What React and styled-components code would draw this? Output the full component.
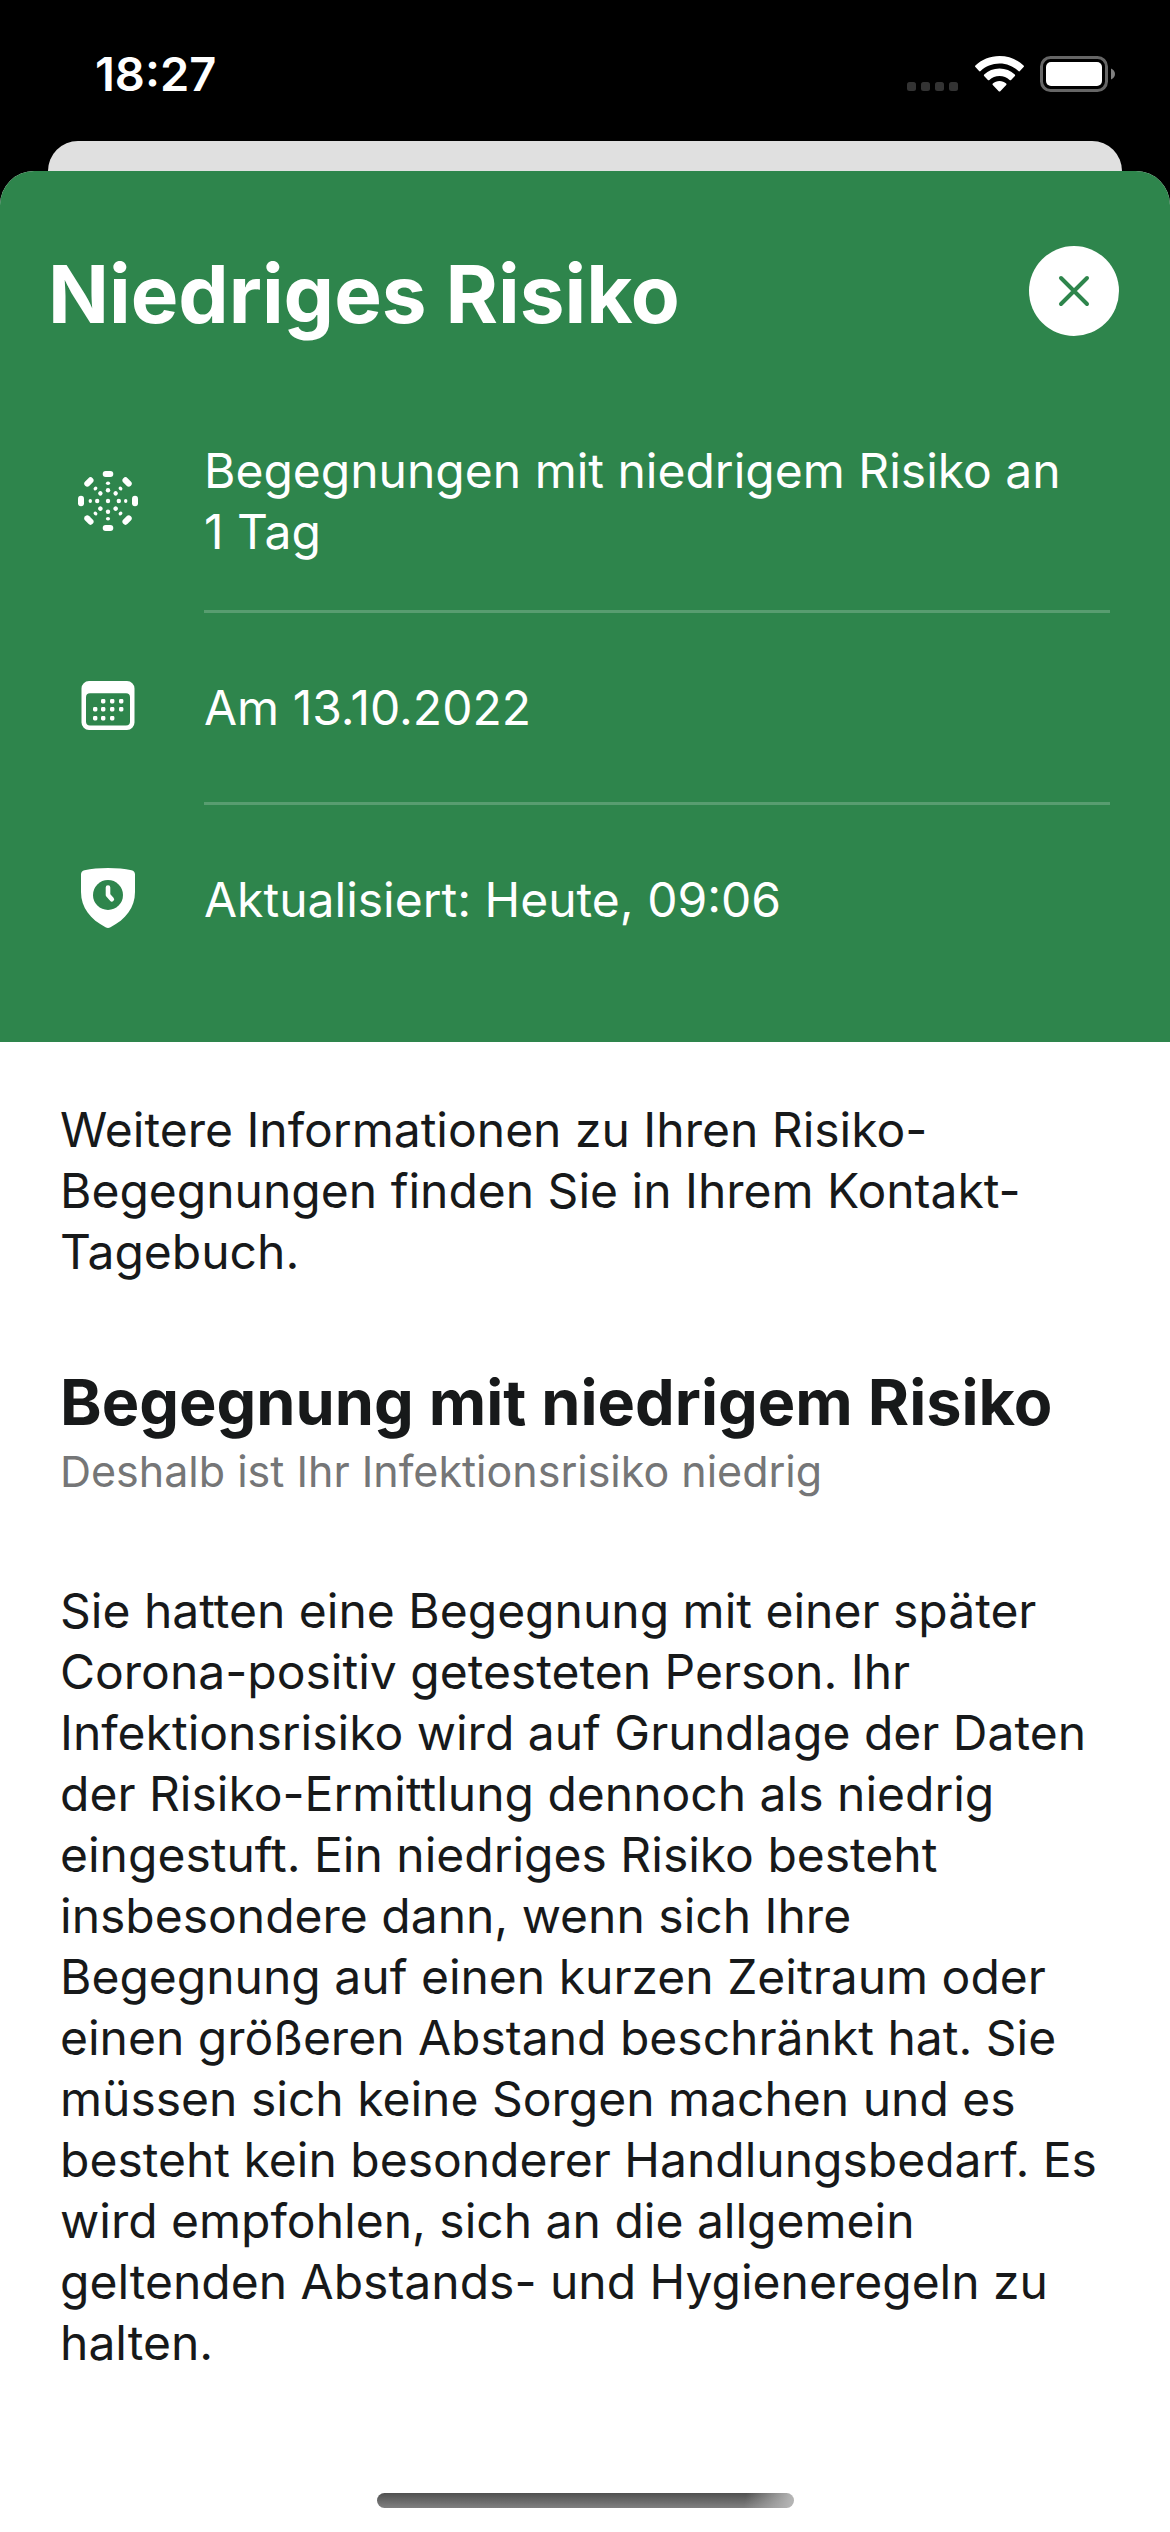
import React from "react";
import styled, { createGlobalStyle } from "styled-components";

const GREEN = "#2e854c";

const GlobalStyle = createGlobalStyle`
  * { box-sizing: border-box; }
  body {
    margin: 0;
    background: #000;
    font-family: Inter, "Liberation Sans", sans-serif;
  }
  h1, h2, p, ul { margin: 0; padding: 0; }
`;

const Screen = styled.div`
  display: flex;
  flex-direction: column;
  min-height: 100vh;
`;

const StatusBar = styled.header`
  display: flex;
  align-items: flex-start;
  justify-content: space-between;
  height: 141px;
  padding: 44px 54px 0 95px;
  color: #fff;
`;

const Clock = styled.time`
  font-size: 47px;
  font-weight: 600;
  line-height: 60px;
`;

const StatusIcons = styled.div`
  display: flex;
  align-items: center;
  gap: 16px;
  height: 60px;
`;

const PreviousSheet = styled.div`
  height: 30px;
  margin: 0 48px;
  border-radius: 30px 30px 0 0;
  background: #e0e0e0;
`;

const Sheet = styled.main`
  display: flex;
  flex: 1;
  flex-direction: column;
  overflow: hidden;
  border-radius: 34px 34px 0 0;
  background: #fff;
`;

const RiskHeader = styled.section`
  padding: 75px 0 48px;
  background: ${GREEN};
  color: #fff;
`;

const TitleRow = styled.div`
  display: flex;
  align-items: flex-start;
  justify-content: space-between;
  margin-bottom: 50px;
  padding: 0 51px 0 48px;
`;

const Title = styled.h1`
  font-size: 80px;
  font-weight: 700;
  line-height: 96px;
`;

const CloseButton = styled.button`
  display: flex;
  flex: none;
  align-items: center;
  justify-content: center;
  width: 90px;
  height: 90px;
  padding: 0;
  border: 0;
  border-radius: 50%;
  background: #fff;
  color: ${GREEN};
`;

const FactList = styled.ul`
  list-style: none;
  padding: 0 60px 0 78px;
`;

const Fact = styled.li`
  display: flex;
  align-items: stretch;
  gap: 66px;
`;

const FactIcon = styled.span`
  display: flex;
  flex: none;
  align-items: center;
  width: 60px;
  padding-bottom: 3px;
`;

const FactText = styled.p`
  display: flex;
  flex: 1;
  align-items: center;
  min-height: ${({ $divided }) => ($divided ? 192 : 189)}px;
  padding: 48px 0;
  border-bottom: ${({ $divided }) => ($divided ? "3px solid #589d70" : "0")};
  font-size: 48px;
  line-height: 61px;
`;

const Content = styled.section`
  display: flex;
  flex-direction: column;
  gap: 80px;
  padding: 57px 60px;
  color: #17191a;
`;

const Paragraph = styled.p`
  font-size: 48px;
  line-height: 61px;
`;

const Heading = styled.h2`
  font-size: 63px;
  font-weight: 700;
  line-height: 80px;
`;

const Subheading = styled.p`
  color: #757677;
  font-size: 43px;
  line-height: 58px;
`;

const HomeIndicator = styled.div`
  width: 417px;
  height: 15px;
  margin: auto auto 24px;
  border-radius: 8px;
  background:
    linear-gradient(100deg, transparent 88%, #b4b4b4 99%),
    linear-gradient(#505050, #808080);
`;

const RAYS = [0, 45, 90, 135, 180, 225, 270, 315];

function EncounterIcon() {
  return (
    <svg width="60" height="60" viewBox="0 0 60 60" fill="#fff" aria-hidden="true">
      <circle cx="30" cy="30" r="2.2" />
      {RAYS.map((angle) => (
        <g key={angle} transform={`rotate(${angle} 30 30)`}>
          <rect x="24.7" y="0" width="10.6" height="6" rx="3" />
          <ellipse cx="30" cy="12.3" rx="2.1" ry="1.7" />
          <circle cx="30" cy="19.2" r="2.2" />
        </g>
      ))}
    </svg>
  );
}

const DAYS = [
  [23, 21], [32, 21], [41, 21],
  [15, 29], [23, 29], [32, 29], [41, 29],
  [15, 38], [23, 38], [32, 38],
];

function CalendarIcon() {
  return (
    <svg width="60" height="60" viewBox="0 0 60 60" fill="#fff" aria-hidden="true">
      <path
        fillRule="evenodd"
        d="M11 3h38a7.500 7.500 0 0 1 7.500 7.500v34a7.500 7.500 0 0 1-7.500 7.500H11a7.500 7.500 0 0 1-7.500-7.500v-34A7.500 7.500 0 0 1 11 3zM12 15.300a4 4 0 0 0-4 4V43.500a4 4 0 0 0 4 4H48a4 4 0 0 0 4-4V19.300a4 4 0 0 0-4-4z"
      />
      {DAYS.map(([x, y]) => (
        <rect key={`${x}-${y}`} x={x} y={y} width="4.400" height="4.400" rx="1.400" />
      ))}
    </svg>
  );
}

function ShieldClockIcon() {
  return (
    <svg width="60" height="60" viewBox="0 0 60 60" aria-hidden="true">
      <path
        fill="#fff"
        d="M30 0c8.500 0 17 .9 23.500 2.200 2.300.5 3.500 2 3.500 4.300V24c0 15.500-9.500 27.500-24.500 35.200-1.700.9-3.300.9-5 0C12.500 51.500 3 39.500 3 24V6.500c0-2.300 1.200-3.800 3.500-4.300C13 .9 21.500 0 30 0z"
      />
      <circle cx="30" cy="27" r="15" fill={GREEN} />
      <path d="M30 19.500v7.500l3.800 4.200" fill="none" stroke="#fff" strokeWidth="4.600" strokeLinecap="round" strokeLinejoin="round" />
    </svg>
  );
}

function CloseIcon() {
  return (
    <svg width="32" height="32" viewBox="0 0 32 32" aria-hidden="true">
      <path d="M3 3l26 26M29 3L3 29" stroke="currentColor" strokeWidth="4" strokeLinecap="round" />
    </svg>
  );
}

function SignalDots() {
  return (
    <svg width="52" height="36" viewBox="0 0 52 36" fill="#333" aria-hidden="true">
      {[0, 14, 28, 42].map((x) => (
        <rect key={x} x={x} y="26" width="9" height="9" rx="2.500" />
      ))}
    </svg>
  );
}

function WifiIcon() {
  return (
    <svg width="49" height="36" viewBox="0 0 49 36" fill="#fff" aria-hidden="true">
      <path d="M24.500 0C15 0 6.500 3.600.4 9.500c-.5.500-.5 1 0 1.500l3.700 4c.4.500 1 .5 1.500 0C10.600 10.300 17.200 7.500 24.500 7.500s13.900 2.800 18.900 7.500c.5.500 1.100.5 1.500 0l3.700-4c.5-.5.500-1 0-1.500C42.500 3.600 34 0 24.500 0z" />
      <path d="M24.500 12.500c-6 0-11.300 2.200-15.300 5.900-.5.500-.5 1-.1 1.500l3.800 4c.4.500 1 .5 1.500.1 2.700-2.400 6.200-3.900 10.100-3.900s7.400 1.500 10.100 3.900c.5.400 1.100.4 1.500-.1l3.800-4c.4-.5.400-1-.1-1.500-4-3.700-9.300-5.900-15.300-5.900z" />
      <path d="M24.500 25c-2.600 0-4.900.9-6.700 2.400-.5.500-.5 1 0 1.500l5.900 6.300c.5.500 1.100.5 1.600 0l5.900-6.300c.5-.5.500-1 0-1.500C29.400 25.900 27.100 25 24.500 25z" />
    </svg>
  );
}

function BatteryIcon() {
  return (
    <svg width="76" height="36" viewBox="0 0 76 36" aria-hidden="true">
      <rect x="1.500" y="1.500" width="65" height="33" rx="9" fill="none" stroke="#666" strokeWidth="3" />
      <rect x="6" y="6" width="56" height="24" rx="5" fill="#fff" />
      <path d="M71 12.500c2.500.9 4 3 4 5.500s-1.500 4.600-4 5.500z" fill="#808080" />
    </svg>
  );
}

const FACTS = [
  { Icon: EncounterIcon, text: "Begegnungen mit niedrigem Risiko an 1\u00a0Tag" },
  { Icon: CalendarIcon, text: "Am 13.10.2022" },
  { Icon: ShieldClockIcon, text: "Aktualisiert: Heute, 09:06" },
];

export default function App() {
  return (
    <Screen>
      <GlobalStyle />
      <StatusBar>
        <Clock>18:27</Clock>
        <StatusIcons>
          <SignalDots />
          <WifiIcon />
          <BatteryIcon />
        </StatusIcons>
      </StatusBar>
      <PreviousSheet />
      <Sheet lang="de">
        <RiskHeader>
          <TitleRow>
            <Title>Niedriges Risiko</Title>
            <CloseButton type="button" aria-label="Schließen">
              <CloseIcon />
            </CloseButton>
          </TitleRow>
          <FactList>
            {FACTS.map(({ Icon, text }, index) => (
              <Fact key={text}>
                <FactIcon>
                  <Icon />
                </FactIcon>
                <FactText $divided={index < FACTS.length - 1}>{text}</FactText>
              </Fact>
            ))}
          </FactList>
        </RiskHeader>
        <Content>
          <Paragraph>
            Weitere Informationen zu Ihren Risiko-Begegnungen finden Sie in Ihrem Kontakt-Tagebuch.
          </Paragraph>
          <div>
            <Heading>Begegnung mit niedrigem Risiko</Heading>
            <Subheading>Deshalb ist Ihr Infektionsrisiko niedrig</Subheading>
          </div>
          <Paragraph>
            Sie hatten eine Begegnung mit einer später Corona-positiv getesteten Person. Ihr
            Infektionsrisiko wird auf Grundlage der Daten der Risiko-Ermittlung dennoch als niedrig
            eingestuft. Ein niedriges Risiko besteht insbesondere dann, wenn sich Ihre Begegnung auf
            einen kurzen Zeitraum oder einen größeren Abstand beschränkt hat. Sie müssen sich keine
            Sorgen machen und es besteht kein besonderer Handlungsbedarf. Es wird empfohlen, sich an
            die allgemein geltenden Abstands- und Hygieneregeln zu halten.
          </Paragraph>
        </Content>
        <HomeIndicator />
      </Sheet>
    </Screen>
  );
}
